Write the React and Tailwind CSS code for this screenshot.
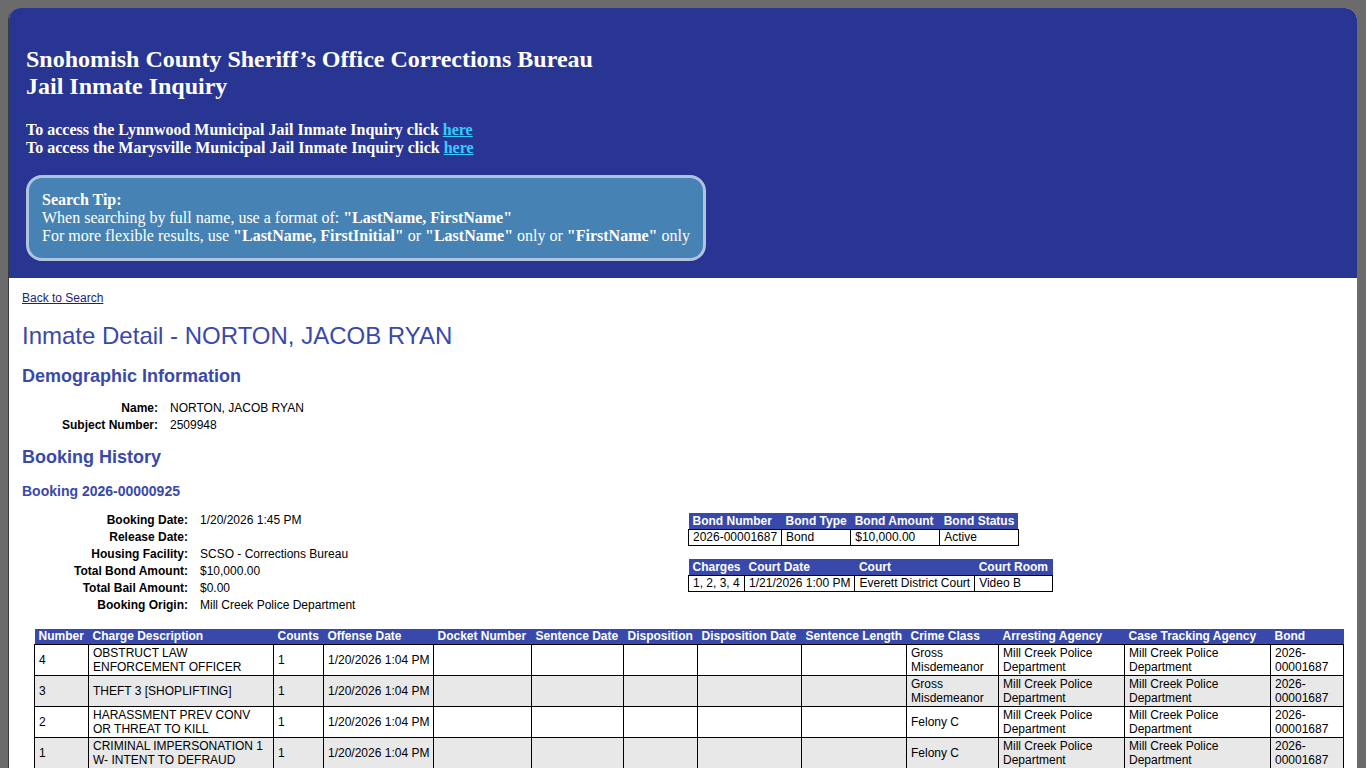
import React from 'react';

const charges = [
  { num: '4', desc: 'OBSTRUCT LAW ENFORCEMENT OFFICER', cls: 'Gross Misdemeanor' },
  { num: '3', desc: 'THEFT 3 [SHOPLIFTING]', cls: 'Gross Misdemeanor' },
  { num: '2', desc: 'HARASSMENT PREV CONV OR THREAT TO KILL', cls: 'Felony C' },
  { num: '1', desc: 'CRIMINAL IMPERSONATION 1 W- INTENT TO DEFRAUD', cls: 'Felony C' },
];

const cols = [
  ['Number', 'w-[54px]'],
  ['Charge Description', 'w-[185px]'],
  ['Counts', 'w-[50px]'],
  ['Offense Date', 'w-[110px]'],
  ['Docket Number', 'w-[98px]'],
  ['Sentence Date', 'w-[92px]'],
  ['Disposition', 'w-[74px]'],
  ['Disposition Date', 'w-[104px]'],
  ['Sentence Length', 'w-[105px]'],
  ['Crime Class', 'w-[92px]'],
  ['Arresting Agency', 'w-[126px]'],
  ['Case Tracking Agency', 'w-[146px]'],
  ['Bond', 'w-[73px]'],
];

const Info = ({ label, value, labelW }) => (
  <div className="flex h-[17px] items-center">
    <div className={`${labelW} text-right font-bold pr-3`}>{label}</div>
    <div>{value}</div>
  </div>
);

const App = () => {
  const th = 'bg-[#3949ab] text-white font-bold text-left px-[4px] py-0 leading-[15px] whitespace-nowrap';
  const thSm = 'bg-[#3949ab] text-white font-bold text-left px-[4px] py-0 leading-[16px] whitespace-nowrap';
  const td = 'border border-black px-[4px] align-middle leading-[14px]';
  const sm = 'border border-black px-[4px] leading-[15px] whitespace-nowrap';

  return (
    <div className="min-h-screen bg-[#6b6b6b] pt-[8px] pl-[8px] pr-[9px]">
      <div className="rounded-t-[12px] overflow-hidden bg-white border-l border-[#3a3a3a]">
        {/* Header */}
        <div className="bg-[#283593] text-white px-[17px] pt-[38px] pb-[17px] font-['Liberation_Serif',serif]">
          <h1 className="text-[24px] font-bold leading-[27px]">
            Snohomish County Sheriff’s Office Corrections Bureau
            <br />
            Jail Inmate Inquiry
          </h1>
          <div className="mt-[21px] text-[16px] font-bold leading-[18px]">
            <div>
              To access the Lynnwood Municipal Jail Inmate Inquiry click{' '}
              <a href="#" className="text-[#33ccff] underline">here</a>
            </div>
            <div>
              To access the Marysville Municipal Jail Inmate Inquiry click{' '}
              <a href="#" className="text-[#33ccff] underline">here</a>
            </div>
          </div>
          <div className="mt-[18px] w-[680px] bg-[#4682b4] border-[3px] border-[#b0c4de] rounded-[16px] px-[13px] py-[13px] text-[16px] leading-[18px]">
            <div className="font-bold">Search Tip:</div>
            <div>
              When searching by full name, use a format of: <b>"LastName, FirstName"</b>
            </div>
            <div>
              For more flexible results, use <b>"LastName, FirstInitial"</b> or <b>"LastName"</b> only or{' '}
              <b>"FirstName"</b> only
            </div>
          </div>
        </div>

        {/* Content */}
        <div className="pl-[13px] pr-[13px] pt-[11px] pb-6 font-['Liberation_Sans',Arial,sans-serif] text-[12px] text-black">
          <a href="#" className="text-[#1a237e] underline leading-[14px]">Back to Search</a>

          <h2 className="mt-[15px] text-[24px] leading-[28px] text-[#3949ab]">
            Inmate Detail - NORTON, JACOB RYAN
          </h2>

          <h3 className="mt-[15px] text-[18px] font-bold leading-[22px] text-[#3949ab]">
            Demographic Information
          </h3>
          <div className="mt-[12px]">
            <Info label="Name:" value="NORTON, JACOB RYAN" labelW="w-[148px]" />
            <Info label="Subject Number:" value="2509948" labelW="w-[148px]" />
          </div>

          <h3 className="mt-[13px] text-[18px] font-bold leading-[22px] text-[#3949ab]">
            Booking History
          </h3>
          <h4 className="mt-[15px] text-[14px] font-bold leading-[16px] text-[#3949ab]">
            Booking 2026-00000925
          </h4>

          <div className="mt-[12px] flex">
            <div className="w-[666px]">
              <Info label="Booking Date:" value="1/20/2026 1:45 PM" labelW="w-[178px]" />
              <Info label="Release Date:" value="" labelW="w-[178px]" />
              <Info label="Housing Facility:" value="SCSO - Corrections Bureau" labelW="w-[178px]" />
              <Info label="Total Bond Amount:" value="$10,000.00" labelW="w-[178px]" />
              <Info label="Total Bail Amount:" value="$0.00" labelW="w-[178px]" />
              <Info label="Booking Origin:" value="Mill Creek Police Department" labelW="w-[178px]" />
            </div>
            <div className="pt-[2px]">
              <table className="border-collapse">
                <thead>
                  <tr>
                    <th className={thSm}>Bond Number</th>
                    <th className={thSm}>Bond Type</th>
                    <th className={thSm}>Bond Amount</th>
                    <th className={thSm}>Bond Status</th>
                  </tr>
                </thead>
                <tbody>
                  <tr>
                    <td className={sm}>2026-00001687</td>
                    <td className={sm}>Bond</td>
                    <td className={`${sm} w-[89px]`}>$10,000.00</td>
                    <td className={`${sm} w-[78px]`}>Active</td>
                  </tr>
                </tbody>
              </table>
              <table className="border-collapse mt-[13px]">
                <thead>
                  <tr>
                    <th className={thSm}>Charges</th>
                    <th className={thSm}>Court Date</th>
                    <th className={thSm}>Court</th>
                    <th className={thSm}>Court Room</th>
                  </tr>
                </thead>
                <tbody>
                  <tr>
                    <td className={sm}>1, 2, 3, 4</td>
                    <td className={sm}>1/21/2026 1:00 PM</td>
                    <td className={sm}>Everett District Court</td>
                    <td className={`${sm} w-[78px]`}>Video B</td>
                  </tr>
                </tbody>
              </table>
            </div>
          </div>

          {/* Charges */}
          <table className="mt-[16px] ml-[12px] border-collapse table-fixed w-[1310px]">
            <thead>
              <tr>
                {cols.map(([name, w]) => (
                  <th key={name} className={`${th} ${w}`}>{name}</th>
                ))}
              </tr>
            </thead>
            <tbody>
              {charges.map((c, i) => (
                <tr key={c.num} className={i % 2 === 1 ? 'bg-[#e8e8e8]' : 'bg-white'}>
                  <td className={`${td} h-[31px]`}>{c.num}</td>
                  <td className={td}>{c.desc}</td>
                  <td className={td}>1</td>
                  <td className={`${td} whitespace-nowrap`}>1/20/2026 1:04 PM</td>
                  <td className={td}></td>
                  <td className={td}></td>
                  <td className={td}></td>
                  <td className={td}></td>
                  <td className={td}></td>
                  <td className={td}>{c.cls}</td>
                  <td className={td}>Mill Creek Police Department</td>
                  <td className={td}>Mill Creek Police Department</td>
                  <td className={td}>2026-00001687</td>
                </tr>
              ))}
            </tbody>
          </table>
        </div>
      </div>
    </div>
  );
};

export default App;
